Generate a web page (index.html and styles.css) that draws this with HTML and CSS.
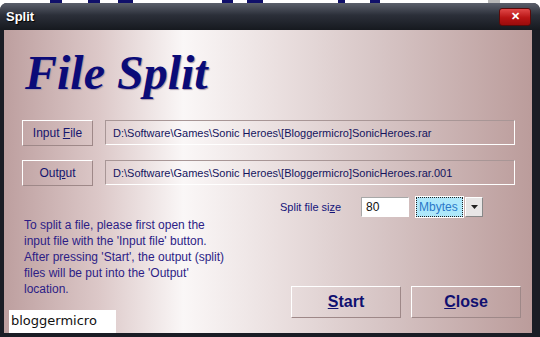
FILE: index.html
```html
<!DOCTYPE html>
<html lang="en">
<head>
  <meta charset="UTF-8" />
  <title>Split</title>
  <link rel="stylesheet" href="styles.css">
</head>
<body>
  <div class="behind"></div>

  <div class="window">
    <div class="titlebar">
      <span class="caption">Split</span>
      <span class="close-x">&#x2715;</span>
    </div>

    <div class="client">
      <h1>File Split</h1>

      <div class="row">
        <button class="btn">Input <u>F</u>ile</button>
        <div class="field">D:\Software\Games\Sonic Heroes\[Bloggermicro]SonicHeroes.rar</div>
      </div>

      <div class="row">
        <button class="btn">Out<u>p</u>ut</button>
        <div class="field">D:\Software\Games\Sonic Heroes\[Bloggermicro]SonicHeroes.rar.001</div>
      </div>

      <div class="lower">
        <div class="left-col">
          <p class="help">
            To split a file, please first open the<br>
            input file with the 'Input file' button.<br>
            After pressing 'Start', the output (split)<br>
            files will be put into the 'Output'<br>
            location.
          </p>
          <div class="watermark">bloggermicro</div>
        </div>

        <div class="right-col">
          <div class="size-row">
            <span class="size-label">Split file si<u>z</u>e</span>
            <div class="size-input">80</div>
            <div class="unit-select">
              <span class="unit-value">Mbytes</span>
              <span class="unit-arrow">
                <svg width="7" height="4" viewBox="0 0 7 4"><path d="M0 0h7L3.5 4z" fill="#222"/></svg>
              </span>
            </div>
          </div>

          <div class="actions">
            <button class="big-btn"><u>S</u>tart</button>
            <button class="big-btn"><u>C</u>lose</button>
          </div>
        </div>
      </div>
    </div>
  </div>
</body>
</html>
```

FILE: styles.css
```css
body {
  margin: 0;
  width: 540px;
  height: 337px;
  overflow: hidden;
  background: #ffffff;
  font-family: 'Liberation Sans', Arial, sans-serif;
}

/* bits of the window underneath */
.behind {
  height: 3px;
  background: linear-gradient(90deg,
    #fff 0 50px, #10106a 50px 62px, #fff 62px 88px, #10106a 88px 100px,
    #fff 100px 118px, #10106a 118px 133px, #fff 133px 222px, #10106a 222px 233px,
    #fff 233px 247px, #10106a 247px 263px, #fff 263px 338px, #10106a 338px 345px,
    #fff 345px 370px, #10106a 370px 380px, #fff 380px 488px, #b8b8b8 488px 500px, #fff 500px);
}

.window {
  height: 334px;
  background: #1a1d25;
  border-radius: 7px 7px 0 0;
  display: flex;
  flex-direction: column;
}

.titlebar {
  height: 27px;
  display: flex;
  align-items: center;
  justify-content: space-between;
  padding: 0 9px 0 6px;
  border-radius: 7px 7px 0 0;
  background: linear-gradient(#5b606c, #2b2f39 45%, #16191f);
}

.caption {
  color: #fff;
  font-weight: bold;
  font-size: 13px;
  text-shadow: 1px 1px 1px #000;
}

.close-x {
  width: 30px;
  height: 16px;
  border-radius: 3px;
  background: linear-gradient(#e04848, #b81414 55%, #9a0c0c);
  border: 1px solid #5a0a0a;
  color: #fff;
  font-size: 11px;
  font-weight: bold;
  display: flex;
  align-items: center;
  justify-content: center;
}

.client {
  flex: 1;
  margin: 0 8px 4px 4px;
  padding: 0 17px 0 18px;
  background: linear-gradient(90deg, #bd9f9f 0%, #dcc8c8 18%, #faf7f7 34%, #ece2e2 50%, #d6c4c4 72%, #bb9c9b 100%);
  color: #0f0f6e;
}

h1 {
  margin: 20px 0 0 3px;
  font-family: 'Liberation Serif', 'Times New Roman', serif;
  font-style: italic;
  font-weight: bold;
  font-size: 48px;
  line-height: 46px;
  color: #0b0b78;
  text-shadow: 1px 1px 1px #a898a8;
}

.row {
  display: flex;
  gap: 12px;
  margin-top: 24px;
}

.row + .row {
  margin-top: 14px;
}

.btn {
  width: 71px;
  height: 26px;
  padding: 0;
  background: transparent;
  border: 1px solid;
  border-color: #fff #9e8888 #9e8888 #fff;
  font-family: 'Liberation Sans', Arial, sans-serif;
  font-size: 12px;
  color: #15156e;
}

.field {
  flex: 1;
  height: 25px;
  box-sizing: border-box;
  padding: 0 7px;
  display: flex;
  align-items: center;
  border: 1px solid;
  border-color: #a89696 #fff #fff #a89696;
  font-size: 11px;
  color: #14145e;
  white-space: nowrap;
}

.lower {
  display: flex;
  margin-top: 11px;
}

.left-col {
  flex: none;
  width: 258px;
  display: flex;
  flex-direction: column;
}

.help {
  margin: 20px 0 0 2px;
  font-size: 12px;
  line-height: 16px;
  color: #2c1d86;
}

.watermark {
  margin: 13px 0 0 -13px;
  width: 107px;
  height: 23px;
  box-sizing: border-box;
  padding: 3px 0 0 2px;
  background: #fff;
  font-family: 'DejaVu Sans', Verdana, sans-serif;
  font-size: 13px;
  color: #111;
}

.right-col {
  flex: 1;
  min-width: 0;
  display: flex;
  flex-direction: column;
}

.size-row {
  display: flex;
  align-items: center;
  height: 20px;
}

.size-label {
  width: 81px;
  font-size: 11px;
  color: #14147a;
}

.size-input {
  width: 48px;
  height: 20px;
  box-sizing: border-box;
  padding: 2px 0 0 4px;
  background: #fff;
  border: 1px solid;
  border-color: #a8a8a8 #fff #fff #a8a8a8;
  font-size: 12px;
  color: #111;
}

.unit-select {
  margin-left: 7px;
  display: flex;
  gap: 2px;
  height: 20px;
}

.unit-value {
  width: 47px;
  box-sizing: border-box;
  padding-left: 2px;
  background: #aee8fb;
  border: 1px dotted #222;
  outline: 1px solid #fff;
  font-size: 12px;
  line-height: 18px;
  color: #2a78c8;
}

.unit-arrow {
  width: 16px;
  background: #e8e6e6;
  border: 1px solid;
  border-color: #fff #888 #888 #fff;
  display: flex;
  align-items: center;
  justify-content: center;
}

.actions {
  margin-top: 69px;
  margin-left: 11px;
  display: flex;
  gap: 10px;
}

.big-btn {
  flex: none;
  width: 110px;
  height: 32px;
  padding: 0;
  background: transparent;
  border: 1px solid;
  border-color: #fff #9e8888 #9e8888 #fff;
  font-family: 'Liberation Sans', Arial, sans-serif;
  font-size: 16px;
  font-weight: bold;
  color: #101070;
}
```
